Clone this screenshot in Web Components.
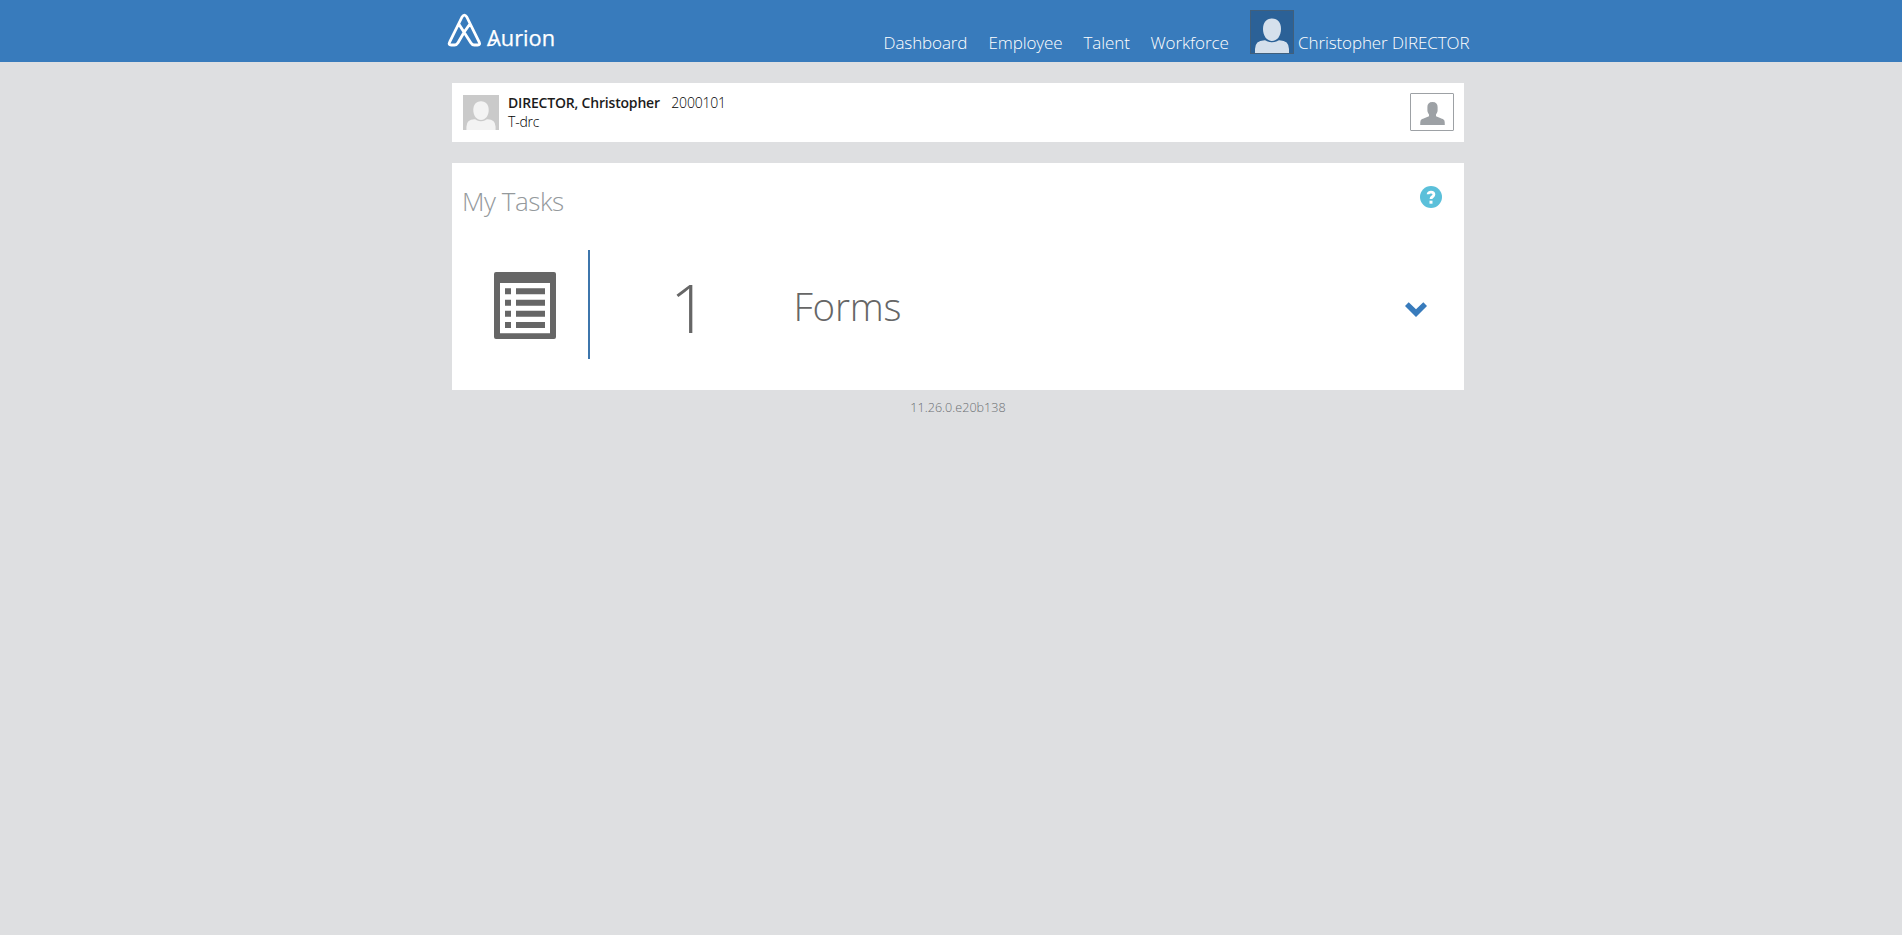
<!DOCTYPE html>
<html lang="en">
<head>
<meta charset="utf-8">
<title>Aurion</title>
<style>
body{margin:0;background:#dedfe1;font-family:"Open Sans","Noto Sans",sans-serif;font-weight:300;color:#000;min-height:935px}
</style>
</head>
<body>
<aurion-app></aurion-app>
<script>
function define(name, html){
  customElements.define(name, class extends HTMLElement{
    constructor(){
      super();
      const t=document.createElement('template');
      t.innerHTML=html;
      this.attachShadow({mode:'open'}).append(t.content.cloneNode(true));
    }
  });
}

define('aurion-logo',`<style>:host{display:block;width:112px;height:38px}svg{display:block;overflow:visible}
text{font:400 22px "Open Sans",sans-serif;fill:#fff;stroke:#fff;stroke-width:.25px}</style>
<svg width="112" height="38" viewBox="0 0 112 38" fill="none" stroke="#fff" stroke-linecap="round" stroke-linejoin="round">
<path stroke-width="2.8" d="M17.4 18.8 11 29.8Q9.7 32 7.5 32H4.2Q1.1 32 2.6 29.2L15 4Q17.4.2 19.8 4L32.2 29.2Q33.6 32 30.6 32H27.3Q25.1 32 23.8 29.8L11.8 11M17.4 18.8 22.9 11"/>
<path stroke-width="1.7" d="M41.5 32.1H45Q46.8 32 47.8 30.2L49.5 27"/>
<text x="40" y="33" textLength="68" lengthAdjust="spacingAndGlyphs">Aurion</text>
</svg>`);

define('user-avatar',`<style>:host{display:block;box-sizing:border-box;background:var(--bg);color:var(--fg)}svg{display:block;width:100%;height:100%}</style>
<svg viewBox="0 0 42 42" preserveAspectRatio="none" fill="currentColor"><path d="M21 7.5C27 7.5 30 12 30 18C30 25 26 30 21 30S12 25 12 18C12 12 15 7.5 21 7.5Z"/><path d="M4 42V38Q4 29.5 13.5 29.2Q15 29.2 16 30.2Q21 32.5 26 30.2Q27 29.2 28.5 29.2Q38 29.5 38 38V42Z"/></svg>`);

define('nav-item',`<style>:host{display:block;height:24px;line-height:24px;font-size:17px;letter-spacing:-.1px;color:#fff;white-space:nowrap}</style><slot></slot>`);

define('app-header',`<style>
:host{display:block;height:62px;background:#387bbc}
.in{width:1022px;margin-left:447px;height:62px;display:flex;align-items:flex-start}
aurion-logo{margin-top:13px}
nav{display:flex;margin:31px 0 0 324.5px}
nav-item{flex:none}
user-avatar{--bg:#2b6197;--fg:#d5e0ec;width:44px;height:44px;flex:none;border:1px solid #405f7c;margin:10px 4px 0 0}
.me{margin-top:31px}
</style><div class="in"><aurion-logo></aurion-logo><nav>
<nav-item style="width:105px">Dashboard</nav-item><nav-item style="width:95px">Employee</nav-item><nav-item style="width:67px">Talent</nav-item><nav-item style="width:99.5px">Workforce</nav-item></nav>
<user-avatar></user-avatar><nav-item class="me">Christopher DIRECTOR</nav-item></div>`);

define('person-card',`<style>
:host{display:flex;box-sizing:border-box;width:1012px;height:59px;background:#fff;padding:0 10px 0 11px}
user-avatar{--bg:#cacaca;--fg:#f3f3f3;width:36px;height:35px;margin:12px 9px 0 0}
.t{flex:1;font-size:14px;line-height:19px;padding-top:10px}
b{font-weight:600;letter-spacing:-.19px;margin-right:11.5px;color:#1c1c1c}
span{letter-spacing:-.2px}
.btn{box-sizing:border-box;width:44px;height:38px;border:1px solid #9da1a5;border-radius:1px;margin-top:10px}
svg{display:block}
</style><user-avatar></user-avatar><div class="t"><div><b>DIRECTOR, Christopher</b><span>2000101</span></div><div><span>T-drc</span></div></div>
<div class="btn"><svg width="42" height="36" viewBox="0 0 42 36" fill="#9da1a5"><path d="M21.5 8C25 8 26.7 10 26.6 13V16.5C26.6 18.5 25.5 19.4 25 20.5V22.2C28 24 32 24.2 33.4 26.4Q33.8 27.5 33.8 31H9.2Q9.2 27.5 9.6 26.4C11 24.2 15 24 18 22.2V20.5C17.5 19.4 16.4 18.5 16.4 16.5V13C16.3 10 18 8 21.5 8Z"/></svg></div>`);

define('task-row',`<style>
:host{display:flex;height:109px;color:#666}
.ic{box-sizing:border-box;width:136px;padding:22px 0 0 42px;flex:none}
.n{border-left:2px solid #3d76ac;width:200px;box-sizing:border-box;text-align:center;font-size:67px;line-height:115px;height:109px}
.l{flex:1;font-size:38.5px;letter-spacing:-.25px;line-height:113px;padding-left:5.5px}
.ch{padding:52px 37px 0 0}svg{display:block}
</style><div class="ic"><svg width="62" height="67" viewBox="0 0 62 67" fill="#666"><path fill-rule="evenodd" d="M2 0H60Q62 0 62 2V65Q62 67 60 67H2Q0 67 0 65V2Q0 0 2 0ZM6 11V61.3H56V11Z"/><path d="M11 16.3h6v6h-6zm11 0h29v6H22zM11 27.7h6v6h-6zm11 0h29v6H22zM11 38.8h6v6h-6zm11 0h29v6H22zM11 50h6v6h-6zm11 0h29v6H22z"/></svg></div>
<div class="n"><slot name="count"></slot></div><div class="l"><slot></slot></div>
<div class="ch"><svg width="22" height="15" viewBox="0 0 22 15"><path d="M0 4 3.7.2 11 7.3 18.3.2 22 4 11 15Z" fill="#387bbc"/></svg></div>`);

define('task-panel',`<style>
:host{display:block;width:1012px;height:227px;background:#fff}
.h{display:flex;justify-content:space-between;height:87px}
h1{margin:19px 0 0 10px;font-size:26px;letter-spacing:-.45px;line-height:38px;font-weight:300;color:#94999c}
.q{box-sizing:border-box;width:22px;height:22px;border-radius:50%;background:#5bc0da;margin:23px 22px 0 0}
svg{display:block}
</style><div class="h"><h1>My Tasks</h1><div class="q"><svg width="22" height="22" viewBox="0 0 22 22"><path d="M8.1 8.2C8.1 5.5 13.9 5.3 13.9 8.5C13.9 10.9 11 10.6 11 13" fill="none" stroke="#fff" stroke-width="2.8"/><path d="M9.5 14.7h3v3h-3z" fill="#fff"/></svg></div></div><slot></slot>`);

define('aurion-app',`<style>
:host{display:block}
main{width:1012px;margin-left:452px;display:flex;flex-direction:column;gap:21px;padding-top:21px}
footer{width:1012px;margin-left:452px;text-align:center;font-size:12.6px;line-height:18px;padding-top:9px;color:#6c7074}
</style><app-header></app-header><main><person-card></person-card><task-panel><task-row><span slot="count">1</span>Forms</task-row></task-panel></main><footer>11.26.0.e20b138</footer>`);
</script>
</body>
</html>
